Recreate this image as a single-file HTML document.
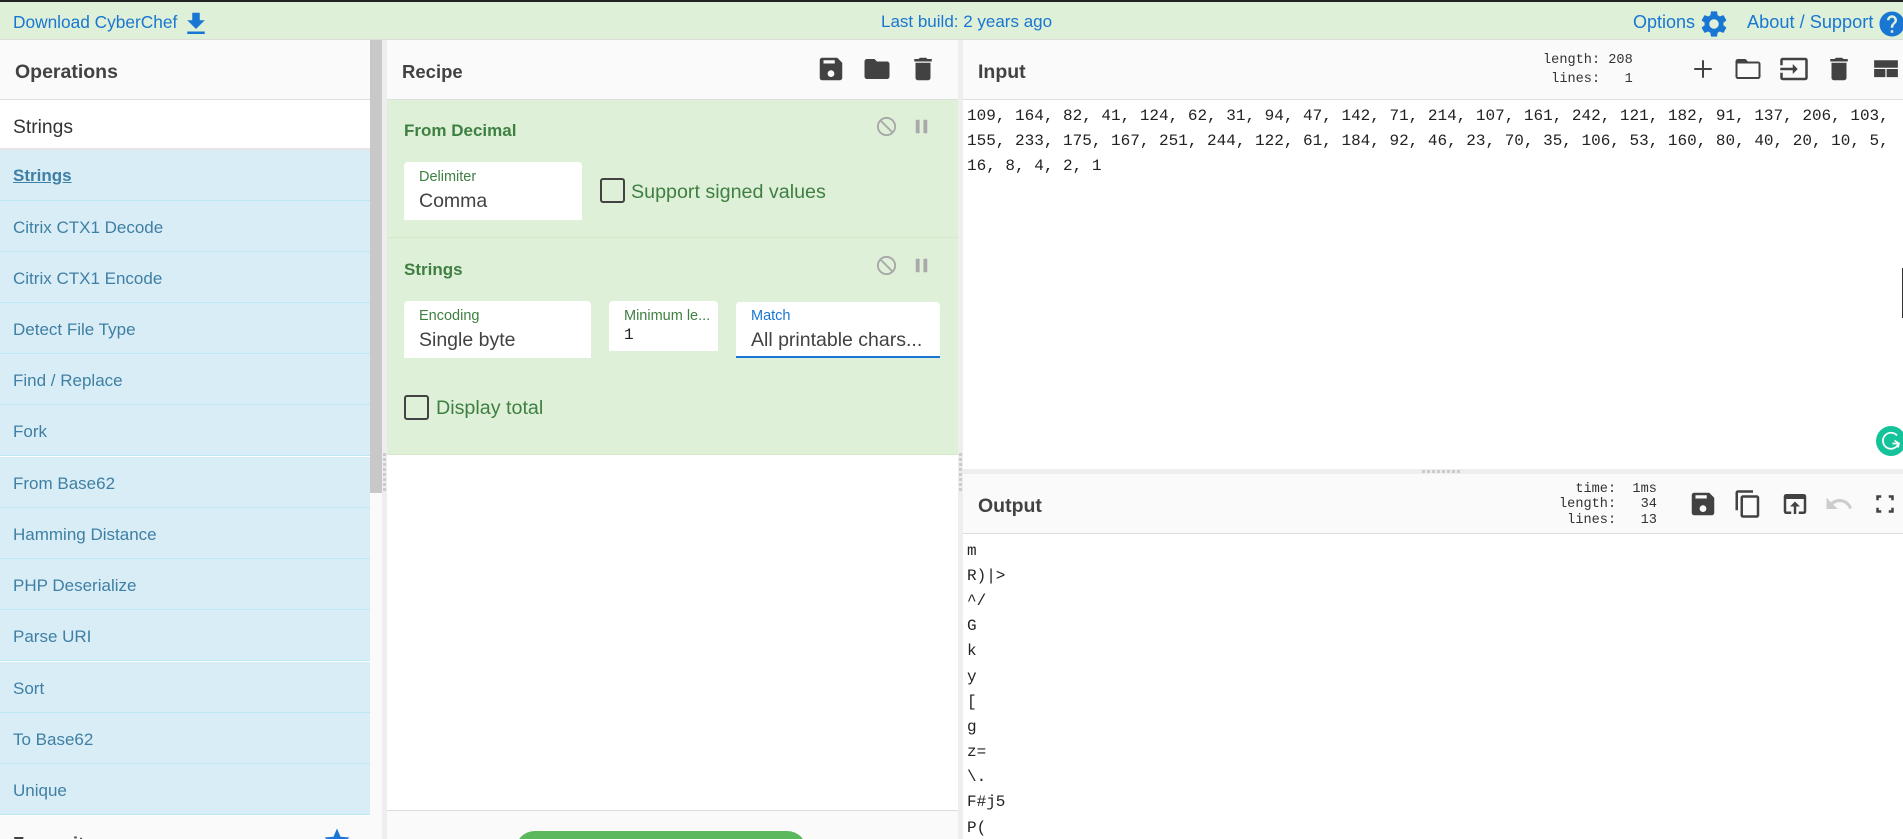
<!DOCTYPE html>
<html><head><meta charset="utf-8"><title>CyberChef</title>
<style>
html,body{margin:0;padding:0;width:1903px;height:839px;overflow:hidden;background:#fff}
body{position:relative;font-family:"Liberation Sans",sans-serif;color:#424242}
.b,.t,svg{position:absolute}
.t{white-space:pre;height:30px;line-height:30px}
.h{font-weight:bold;font-size:19.5px;color:#424242}
.a{font-size:17.3px;color:#1976d2}
.o{left:0;width:370px;height:50px;background:#d9edf7;border-bottom:1px solid #bce8f1;color:#3f7fa3;font-size:17px;line-height:54.5px;text-indent:13px;white-space:pre;position:absolute}
.m{font-family:"Liberation Mono",monospace;font-size:16px;color:#222}
.s{font-family:"Liberation Mono",monospace;font-size:13.6px;color:#333}
.l{font-size:14.5px;color:#3e7f42}
.v{font-size:19.5px;color:#424242}
.g{font-size:19.7px;color:#3e7f42}
.bx{background:#fff;border-radius:4px 4px 0 0}
.c{width:21px;height:21px;border:2px solid #424242;border-radius:3px}
.d{width:3px;height:3px;background:#ccc}
svg{fill:#424242}
.i30{width:30px;height:30px}
.i23{width:23px;height:23px;fill:#a9a9a9}
</style></head>
<body>
<!-- top bar -->
<div class="b" style="left:0;top:0;width:1903px;height:2px;background:#222"></div>
<div class="b" style="left:0;top:2px;width:1903px;height:37px;background:#dff0d8"></div>
<div class="b" style="left:0;top:39px;width:1903px;height:1px;background:#ddd"></div>
<div class="t a" style="left:13px;top:7px">Download CyberChef</div>
<svg class="i30" viewBox="0 0 24 24" style="left:181px;top:9px;fill:#1976d2"><path d="M19 9h-4V3H9v6H5l7 7 7-7zM5 18v2h14v-2H5z"/></svg>
<div class="t a" style="left:881px;top:7px;font-size:17px">Last build: 2 years ago</div>
<div class="t a" style="left:1633px;top:7px;font-size:18px">Options</div>
<svg class="i30" viewBox="0 0 24 24" style="left:1699px;top:9px;fill:#1976d2"><path d="M19.14 12.94c.04-.3.06-.61.06-.94 0-.32-.02-.64-.07-.94l2.03-1.58c.18-.14.23-.41.12-.61l-1.92-3.32c-.12-.22-.37-.29-.59-.22l-2.39.96c-.5-.38-1.03-.7-1.62-.94l-.36-2.54c-.04-.24-.24-.41-.48-.41h-3.84c-.24 0-.43.17-.47.41l-.36 2.54c-.59.24-1.13.57-1.62.94l-2.39-.96c-.22-.08-.47 0-.59.22L2.74 8.87c-.12.21-.08.47.12.61l2.03 1.58c-.05.3-.09.63-.09.94s.02.64.07.94l-2.03 1.58c-.18.14-.23.41-.12.61l1.92 3.32c.12.22.37.29.59.22l2.39-.96c.5.38 1.03.7 1.62.94l.36 2.54c.05.24.24.41.48.41h3.84c.24 0 .44-.17.47-.41l.36-2.54c.59-.24 1.13-.56 1.62-.94l2.39.96c.22.08.47 0 .59-.22l1.92-3.32c.12-.22.07-.47-.12-.61l-2.01-1.58zM12 15.6c-1.98 0-3.6-1.62-3.6-3.6s1.62-3.6 3.6-3.6 3.6 1.62 3.6 3.6-1.62 3.6-3.6 3.6z" transform="translate(12 12) scale(1.05) translate(-12 -12)"/></svg>
<div class="t a" style="left:1747px;top:7px;font-size:18.2px">About / Support</div>
<svg class="i30" viewBox="0 0 24 24" style="left:1877px;top:9px;fill:#1976d2"><path d="M12 2C6.48 2 2 6.48 2 12s4.48 10 10 10 10-4.48 10-10S17.52 2 12 2zm1 17h-2v-2h2v2zm2.07-7.75l-.9.92C13.45 12.9 13 13.5 13 15h-2v-.5c0-1.1.45-2.1 1.17-2.83l1.24-1.26c.37-.36.59-.86.59-1.41 0-1.1-.9-2-2-2s-2 .9-2 2H8c0-2.21 1.79-4 4-4s4 1.79 4 4c0 .88-.36 1.68-.93 2.25z"/></svg>

<!-- operations -->
<div class="b" style="left:0;top:40px;width:370px;height:59px;background:#fafafa"></div>
<div class="b" style="left:0;top:99px;width:370px;height:1px;background:#ddd"></div>
<div class="t h" style="left:15px;top:57px">Operations</div>
<div class="t" style="left:13px;top:113px;font-size:19.3px;color:#333">Strings</div>
<div class="b" style="left:0;top:148px;width:370px;height:2px;background:#e4e4e4"></div>
<div class="o" style="top:150px;font-weight:bold;text-decoration:underline;line-height:52px">Strings</div>
<div class="o" style="top:201px">Citrix CTX1 Decode</div>
<div class="o" style="top:252px">Citrix CTX1 Encode</div>
<div class="o" style="top:303px">Detect File Type</div>
<div class="o" style="top:354px">Find / Replace</div>
<div class="o" style="top:405px">Fork</div>
<div class="o" style="top:457px">From Base62</div>
<div class="o" style="top:508px">Hamming Distance</div>
<div class="o" style="top:559px">PHP Deserialize</div>
<div class="o" style="top:610px">Parse URI</div>
<div class="o" style="top:662px">Sort</div>
<div class="o" style="top:713px">To Base62</div>
<div class="o" style="top:764px">Unique</div>
<div class="b" style="left:0;top:816px;width:382px;height:23px;background:#fafafa"></div>
<div class="t h" style="left:13px;top:829px;font-size:18px">Favourites</div>
<svg class="i30" viewBox="0 0 24 24" style="left:322px;top:826px;fill:#1976d2"><path d="M12 17.27L18.18 21l-1.64-7.03L22 9.24l-7.19-.61L12 2 9.19 8.63 2 9.24l5.46 4.73L5.82 21z"/></svg>
<!-- scrollbar + gutters -->
<div class="b" style="left:370px;top:40px;width:12px;height:453px;background:#c8c8c8"></div>
<div class="b" style="left:370px;top:493px;width:12px;height:346px;background:#fafafa"></div>
<div class="b" style="left:382px;top:40px;width:5px;height:799px;background:#eee"></div>
<div class="b d" style="left:383px;top:453px"></div><div class="b d" style="left:383px;top:458px"></div><div class="b d" style="left:383px;top:463px"></div><div class="b d" style="left:383px;top:468px"></div><div class="b d" style="left:383px;top:473px"></div><div class="b d" style="left:383px;top:478px"></div><div class="b d" style="left:383px;top:483px"></div><div class="b d" style="left:383px;top:488px"></div>

<!-- recipe -->
<div class="b" style="left:387px;top:40px;width:571px;height:59px;background:#fafafa"></div>
<div class="b" style="left:387px;top:99px;width:571px;height:1px;background:#ddd"></div>
<div class="t h" style="left:402px;top:57px;font-size:18.5px">Recipe</div>
<svg class="i30" viewBox="0 0 24 24" style="left:816px;top:54px"><path fill-rule="evenodd" d="M5 3h12l4 4v12c0 1.1-.9 2-2 2H5c-1.1 0-2-.9-2-2V5c0-1.1.9-2 2-2zM6 5v2.6h9V5zM12 13a2.7 2.7 0 1 0 .01 0z"/></svg>
<svg class="i30" viewBox="0 0 24 24" style="left:862px;top:54px"><path d="M10 4H4c-1.1 0-1.99.9-1.99 2L2 18c0 1.1.9 2 2 2h16c1.1 0 2-.9 2-2V8c0-1.1-.9-2-2-2h-8l-2-2z"/></svg>
<svg class="i30" viewBox="0 0 24 24" style="left:908px;top:54px"><path d="M6 19c0 1.1.9 2 2 2h8c1.1 0 2-.9 2-2V7H6v12zM19 4h-3.5l-1-1h-5l-1 1H5v2h14V4z"/></svg>

<div class="b" style="left:387px;top:100px;width:571px;height:137px;background:#dff0d8"></div>
<div class="b" style="left:387px;top:237px;width:571px;height:1px;background:#d6e9c6"></div>
<div class="b" style="left:387px;top:238px;width:571px;height:216px;background:#dff0d8;border-bottom:1px solid #d6e9c6"></div>

<div class="t" style="left:404px;top:116px;font-size:17px;font-weight:bold;color:#3e7f42">From Decimal</div>
<svg class="i23" viewBox="0 0 24 24" style="left:875px;top:115px;fill:none;stroke:#a9a9a9;stroke-width:2"><circle cx="12" cy="12" r="9"/><path d="M5.6 5.6L18.4 18.4"/></svg>
<svg class="i23" viewBox="0 0 24 24" style="left:910px;top:115px"><path d="M6 19h4V5H6v14zm8-14v14h4V5h-4z"/></svg>
<div class="b bx" style="left:404px;top:162px;width:178px;height:58px"></div>
<div class="t l" style="left:419px;top:162px">Delimiter</div>
<div class="t v" style="left:419px;top:186px">Comma</div>
<div class="b c" style="left:600px;top:178px"></div>
<div class="t g" style="left:631px;top:177px">Support signed values</div>

<div class="t" style="left:404px;top:255px;font-size:17px;font-weight:bold;color:#3e7f42">Strings</div>
<svg class="i23" viewBox="0 0 24 24" style="left:875px;top:254px;fill:none;stroke:#a9a9a9;stroke-width:2"><circle cx="12" cy="12" r="9"/><path d="M5.6 5.6L18.4 18.4"/></svg>
<svg class="i23" viewBox="0 0 24 24" style="left:910px;top:254px"><path d="M6 19h4V5H6v14zm8-14v14h4V5h-4z"/></svg>

<div class="b bx" style="left:404px;top:301px;width:187px;height:57px"></div>
<div class="t l" style="left:419px;top:301px">Encoding</div>
<div class="t v" style="left:419px;top:325px">Single byte</div>
<div class="b bx" style="left:609px;top:301px;width:109px;height:50px"></div>
<div class="t l" style="left:624px;top:301px">Minimum le...</div>
<div class="t" style="left:624px;top:320px;font-size:16px;color:#222;font-family:'Liberation Mono',monospace">1</div>
<div class="b bx" style="left:736px;top:302px;width:204px;height:54px;border-bottom:2px solid #1976d2"></div>
<div class="t l" style="left:751px;top:301px;color:#1976d2">Match</div>
<div class="t v" style="left:751px;top:325px">All printable chars...</div>
<div class="b c" style="left:404px;top:395px"></div>
<div class="t g" style="left:436px;top:393px">Display total</div>

<div class="b" style="left:387px;top:810px;width:571px;height:1px;background:#ddd"></div>
<div class="b" style="left:387px;top:811px;width:571px;height:28px;background:#fafafa"></div>
<div class="b" style="left:515px;top:831px;width:292px;height:40px;border-radius:20px;background:#5cb85c"></div>

<div class="b" style="left:958px;top:40px;width:5px;height:799px;background:#eee"></div>
<div class="b d" style="left:959px;top:453px"></div><div class="b d" style="left:959px;top:458px"></div><div class="b d" style="left:959px;top:463px"></div><div class="b d" style="left:959px;top:468px"></div><div class="b d" style="left:959px;top:473px"></div><div class="b d" style="left:959px;top:478px"></div><div class="b d" style="left:959px;top:483px"></div><div class="b d" style="left:959px;top:488px"></div>

<!-- input -->
<div class="b" style="left:963px;top:40px;width:940px;height:59px;background:#fafafa"></div>
<div class="b" style="left:963px;top:99px;width:940px;height:1px;background:#ddd"></div>
<div class="t h" style="left:978px;top:57px">Input</div>
<div class="t s" style="left:1543px;top:46px">length: 208</div>
<div class="t s" style="left:1543px;top:65px"> lines:   1</div>
<svg class="i30" viewBox="0 0 24 24" style="left:1688px;top:54px"><path d="M19 12.8h-6.2V19h-1.6v-6.2H5v-1.6h6.2V5h1.6v6.2H19z"/></svg>
<svg class="i30" viewBox="0 0 24 24" style="left:1733px;top:54px"><path d="M20 6h-8l-2-2H4c-1.1 0-1.99.9-1.99 2L2 18c0 1.1.9 2 2 2h16c1.1 0 2-.9 2-2V8c0-1.1-.9-2-2-2zm.4 12.4H3.6V7.6h16.8v10.8z"/></svg>
<svg class="i30" viewBox="0 0 24 24" style="left:1779px;top:54px"><path d="M21 3.01H3c-1.1 0-2 .9-2 2V9h2V4.99h18v14.03H3V15H1v4.01c0 1.1.9 1.98 2 1.98h18c1.1 0 2-.88 2-1.98v-14c0-1.11-.9-2-2-2zM11 16l4-4-4-4v3H1v2h10v3z"/></svg>
<svg class="i30" viewBox="0 0 24 24" style="left:1824px;top:54px"><path d="M6 19c0 1.1.9 2 2 2h8c1.1 0 2-.9 2-2V7H6v12zM19 4h-3.5l-1-1h-5l-1 1H5v2h14V4z"/></svg>
<svg class="i30" viewBox="0 0 24 24" style="left:1871px;top:54px"><path d="M2.5 5v6h19V5zm0 7v6.5h9V12zm10 0v6.5h9V12z"/></svg>
<div class="t m" style="left:967px;top:101px">109, 164, 82, 41, 124, 62, 31, 94, 47, 142, 71, 214, 107, 161, 242, 121, 182, 91, 137, 206, 103,</div>
<div class="t m" style="left:967px;top:126px">155, 233, 175, 167, 251, 244, 122, 61, 184, 92, 46, 23, 70, 35, 106, 53, 160, 80, 40, 20, 10, 5,</div>
<div class="t m" style="left:967px;top:151px">16, 8, 4, 2, 1</div>
<div class="b" style="left:1902px;top:268px;width:1px;height:50px;background:#333"></div>
<svg style="left:1876px;top:426px;width:30px;height:30px;fill:none" viewBox="0 0 30 30"><circle cx="15" cy="15" r="15" fill="#15c39a"/><path d="M21 9.5A8 8 0 1 0 22.5 17.5H16.5" stroke="#fff" stroke-width="1.8"/><path d="M18.5 14.5l4.5 3-1 4" stroke="#fff" stroke-width="1.6"/></svg>

<!-- horizontal gutter -->
<div class="b" style="left:963px;top:469px;width:940px;height:5px;background:#eee"></div>
<div class="b d" style="left:1422px;top:470px"></div><div class="b d" style="left:1427px;top:470px"></div><div class="b d" style="left:1432px;top:470px"></div><div class="b d" style="left:1437px;top:470px"></div><div class="b d" style="left:1442px;top:470px"></div><div class="b d" style="left:1447px;top:470px"></div><div class="b d" style="left:1452px;top:470px"></div><div class="b d" style="left:1457px;top:470px"></div>

<!-- output -->
<div class="b" style="left:963px;top:474px;width:940px;height:59px;background:#fafafa"></div>
<div class="b" style="left:963px;top:533px;width:940px;height:1px;background:#ddd"></div>
<div class="t h" style="left:978px;top:491px">Output</div>
<div class="t s" style="left:1559px;top:475px">  time:  1ms</div>
<div class="t s" style="left:1559px;top:490px">length:   34</div>
<div class="t s" style="left:1559px;top:506px"> lines:   13</div>
<svg class="i30" viewBox="0 0 24 24" style="left:1688px;top:489px"><path fill-rule="evenodd" d="M5 3h12l4 4v12c0 1.1-.9 2-2 2H5c-1.1 0-2-.9-2-2V5c0-1.1.9-2 2-2zM6 5v2.6h9V5zM12 13a2.7 2.7 0 1 0 .01 0z"/></svg>
<svg class="i30" viewBox="0 0 24 24" style="left:1733px;top:489px"><path d="M16 1H4c-1.1 0-2 .9-2 2v14h2V3h12V1zm3 4H8c-1.1 0-2 .9-2 2v14c0 1.1.9 2 2 2h11c1.1 0 2-.9 2-2V7c0-1.1-.9-2-2-2zm0 16H8V7h11v14z"/></svg>
<svg class="i30" viewBox="0 0 24 24" style="left:1780px;top:489px"><path d="M19 4H5c-1.11 0-2 .9-2 2v12c0 1.1.89 2 2 2h4v-2H5V8h14v10h-4v2h4c1.1 0 2-.9 2-2V6c0-1.1-.89-2-2-2zm-7 6l-4 4h3v6h2v-6h3l-4-4z"/></svg>
<svg class="i30" viewBox="0 0 24 24" style="left:1824px;top:489px;fill:#ccc"><path d="M12.5 8c-2.65 0-5.05.99-6.9 2.6L2 7v9h9l-3.62-3.62c1.39-1.16 3.16-1.88 5.12-1.88 3.54 0 6.55 2.31 7.6 5.5l2.37-.78C21.08 11.03 17.15 8 12.5 8z"/></svg>
<svg class="i30" viewBox="0 0 24 24" style="left:1870px;top:489px"><path d="M5 5h4v2H7v2H5zM15 5h4v4h-2V7h-2zM5 15h2v2h2v2H5zM17 15h2v4h-4v-2h2z"/></svg>
<div class="t m" style="left:967px;top:536px">m</div>
<div class="t m" style="left:967px;top:561px">R)|&gt;</div>
<div class="t m" style="left:967px;top:586px">^/</div>
<div class="t m" style="left:967px;top:611px">G</div>
<div class="t m" style="left:967px;top:636px">k</div>
<div class="t m" style="left:967px;top:662px">y</div>
<div class="t m" style="left:967px;top:687px">[</div>
<div class="t m" style="left:967px;top:712px">g</div>
<div class="t m" style="left:967px;top:737px">z=</div>
<div class="t m" style="left:967px;top:762px">\.</div>
<div class="t m" style="left:967px;top:787px">F#j5</div>
<div class="t m" style="left:967px;top:813px">P(</div>
</body></html>
